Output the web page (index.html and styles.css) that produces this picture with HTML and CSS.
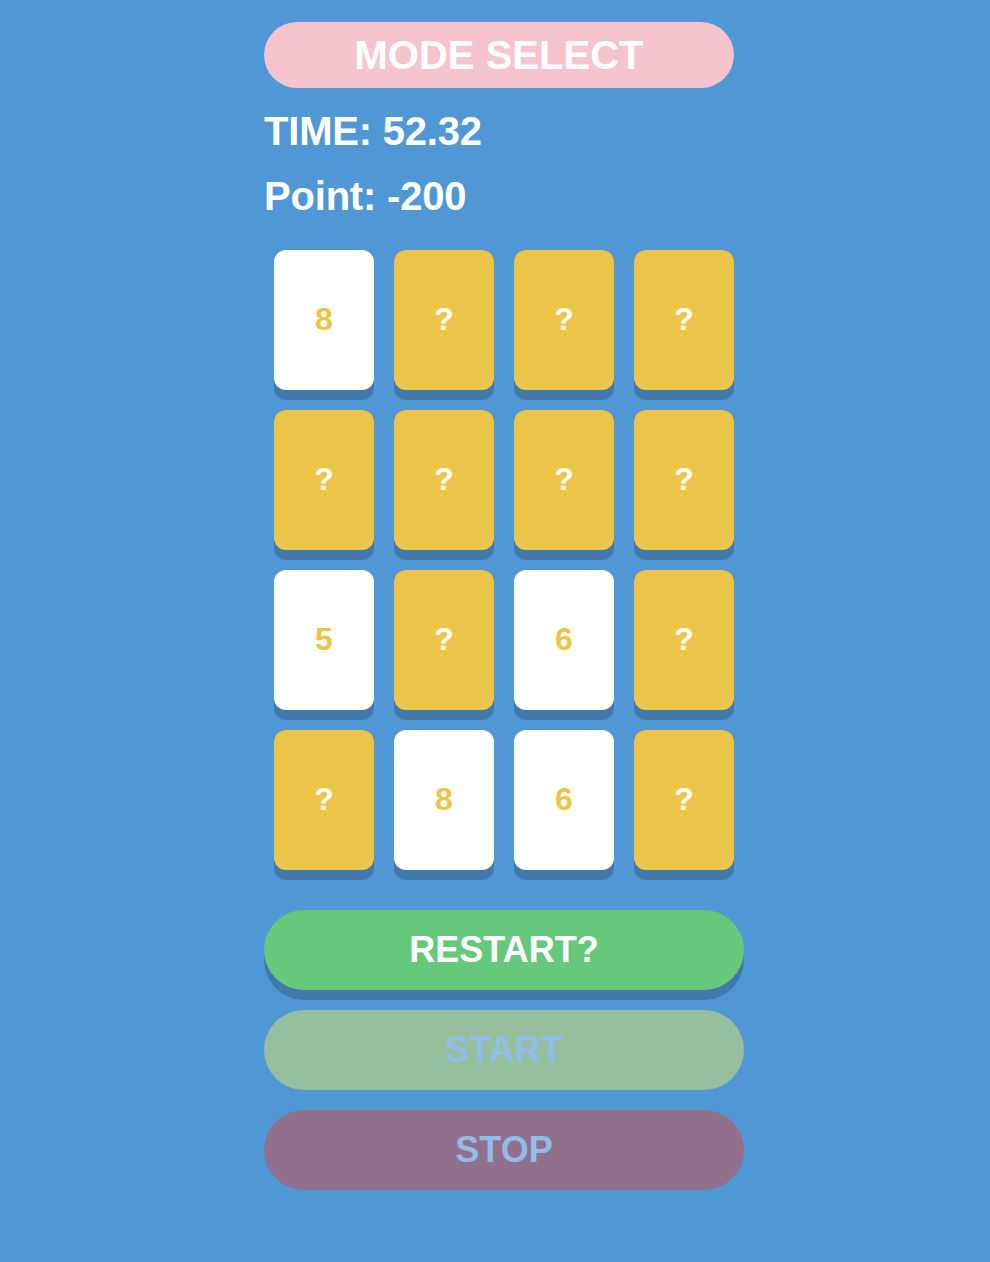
FILE: index.html
```html
<!DOCTYPE html>
<html>
<head>
<meta charset="utf-8">
<link rel="stylesheet" href="styles.css">
</head>
<body>
<div class="game">
  <button class="mode">MODE SELECT</button>
  <div class="stat stat-time">TIME: 52.32</div>
  <div class="stat stat-point">Point: -200</div>
  <div class="board">
    <div class="card open">8</div>
    <div class="card">?</div>
    <div class="card">?</div>
    <div class="card">?</div>
    <div class="card">?</div>
    <div class="card">?</div>
    <div class="card">?</div>
    <div class="card">?</div>
    <div class="card open">5</div>
    <div class="card">?</div>
    <div class="card open">6</div>
    <div class="card">?</div>
    <div class="card">?</div>
    <div class="card open">8</div>
    <div class="card open">6</div>
    <div class="card">?</div>
  </div>
  <div class="actions">
    <button class="btn btn-restart">RESTART?</button>
    <button class="btn btn-start">START</button>
    <button class="btn btn-stop">STOP</button>
  </div>
</div>
</body>
</html>
```
FILE: styles.css
```css
html, body {
  margin: 0;
  padding: 0;
  background: #5097d5;
}
body {
  font-family: "Liberation Sans", Arial, sans-serif;
  min-height: 1262px;
}
.game {
  width: 480px;
  margin-left: 264px;
  padding-top: 22px;
  display: flex;
  flex-direction: column;
}
button {
  font-family: "Liberation Sans", Arial, sans-serif;
  border: none;
  padding: 0;
  cursor: pointer;
}
.mode {
  width: 470px;
  height: 66px;
  border-radius: 33px;
  background: #f5c4cc;
  color: #ffffff;
  font-size: 40px;
  font-weight: bold;
  line-height: 66px;
}
.stat {
  color: #ffffff;
  font-size: 40px;
  font-weight: bold;
  line-height: 46px;
  height: 46px;
  letter-spacing: -0.2px;
}
.stat-time {
  margin-top: 20px;
}
.stat-point {
  margin-top: 19px;
}
.board {
  margin-top: 31px;
  padding: 0 10px;
  display: grid;
  grid-template-columns: repeat(4, 100px);
  grid-auto-rows: 140px;
  gap: 20px;
}
.card {
  background: #eac547;
  border-radius: 12px;
  box-shadow: 0 10px 0 #4279ad;
  color: #ffffff;
  font-size: 32px;
  font-weight: bold;
  display: flex;
  align-items: center;
  justify-content: center;
  padding-bottom: 2px;
  box-sizing: border-box;
}
.card.open {
  background: #ffffff;
  color: #eac547;
}
.actions {
  margin-top: 40px;
  display: flex;
  flex-direction: column;
  gap: 20px;
}
.btn {
  width: 480px;
  height: 80px;
  border-radius: 40px;
  font-size: 36px;
  font-weight: bold;
  color: #ffffff;
}
.btn-restart {
  background: #66c87b;
  box-shadow: 0 10px 0 #4279ad;
}
.btn-start {
  background: #96bf9e;
  color: #8fbfe8;
}
.btn-stop {
  background: #90708c;
  color: #8fbde6;
}
```
